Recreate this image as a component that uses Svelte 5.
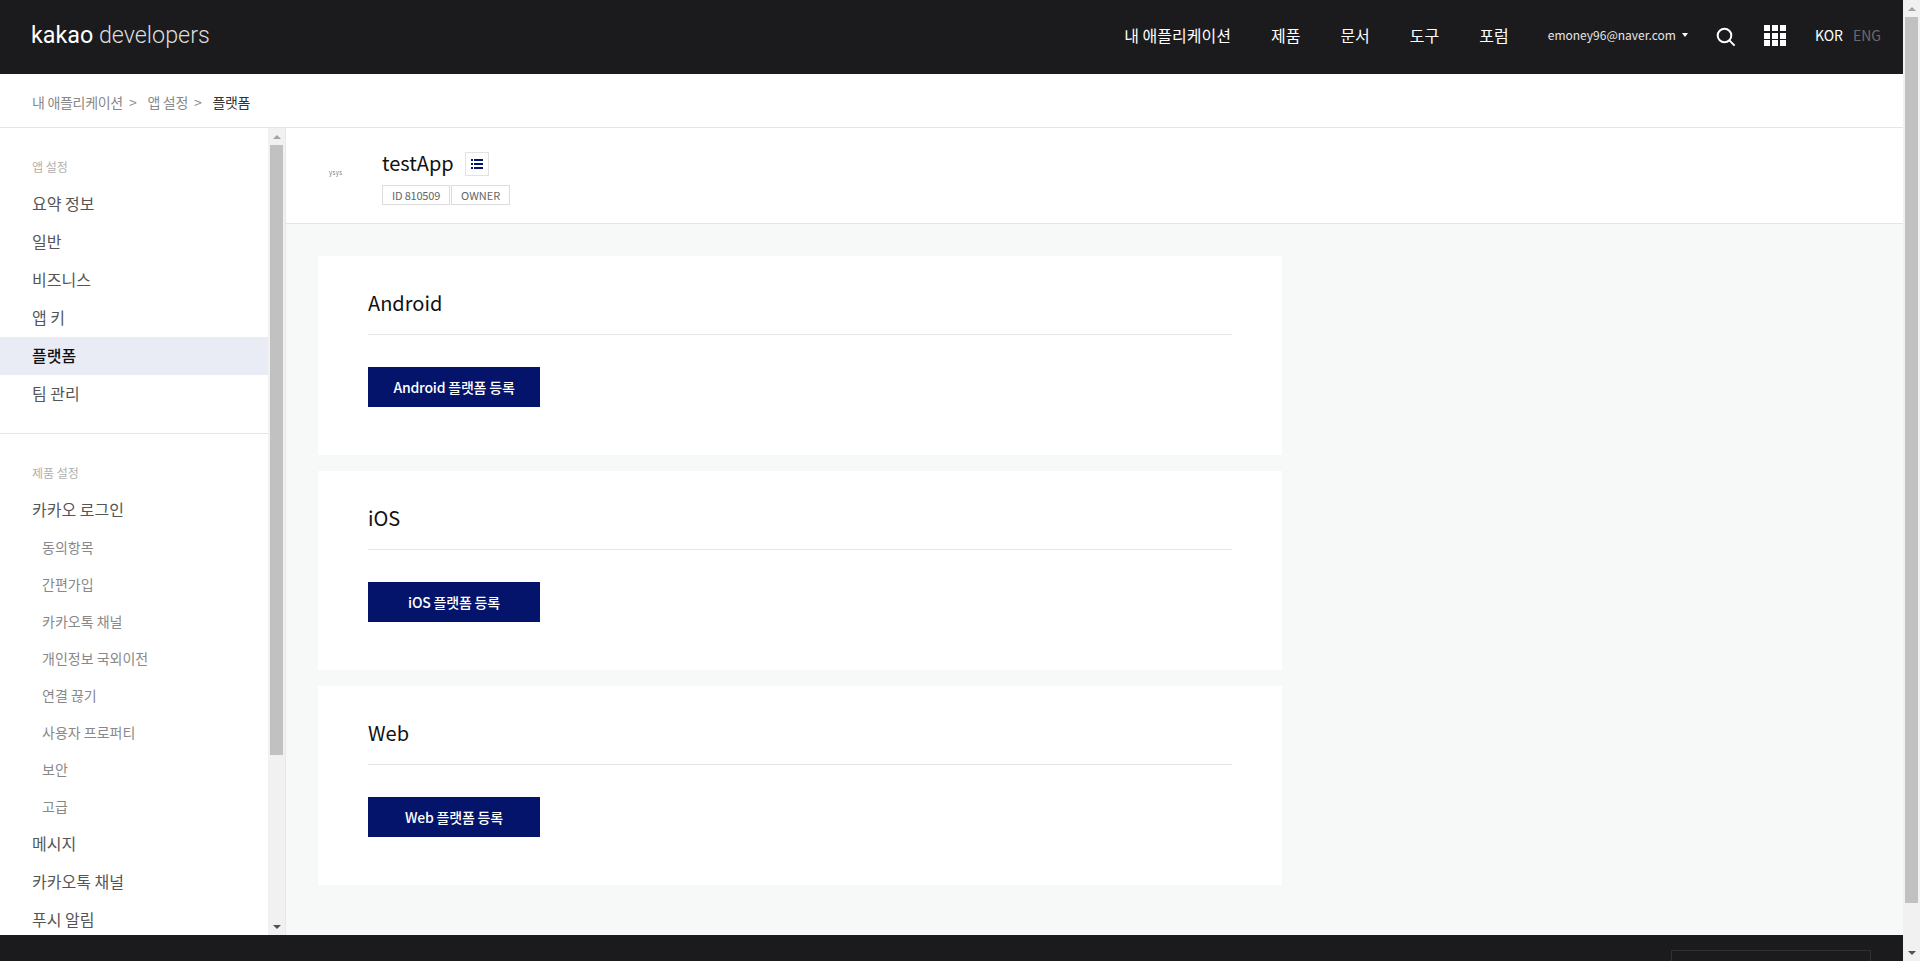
<script lang="ts">
	const appMenu = ['요약 정보', '일반', '비즈니스', '앱 키', '플랫폼', '팀 관리'];
	const loginMenu = ['동의항목', '간편가입', '카카오톡 채널', '개인정보 국외이전', '연결 끊기', '사용자 프로퍼티', '보안', '고급'];
	const platforms = ['Android', 'iOS', 'Web'];
	const nav = ['내 애플리케이션', '제품', '문서', '도구', '포럼'];
</script>

{#snippet scrollbar(kind: string)}
	<div class="scrollbar {kind}">
		<span class="cap"><i class="arrow up"></i></span>
		<div class="thumb"></div>
		<span class="cap end"><i class="arrow down"></i></span>
	</div>
{/snippet}

<div class="app">
	<div class="page">
		<header class="topbar">
			<div class="logo"><b>kakao</b> developers</div>
			<nav class="nav">
				{#each nav as item}
					<a href="#top">{item}</a>
				{/each}
			</nav>
			<div class="account">emoney96@naver.com<span class="caret"></span></div>
			<svg class="search" width="20" height="20" viewBox="0 0 20 20" fill="none" stroke="#fff" stroke-width="2">
				<circle cx="8.5" cy="8.5" r="6.8" />
				<path d="M13.4 13.4 L18.6 18.6" />
			</svg>
			<div class="grid">
				{#each Array(9) as _}
					<i></i>
				{/each}
			</div>
			<div class="lang"><span class="on">KOR</span><span>ENG</span></div>
		</header>

		<div class="crumbs">
			<span>내 애플리케이션</span>
			<em>&gt;</em>
			<span>앱 설정</span>
			<em>&gt;</em>
			<strong>플랫폼</strong>
		</div>

		<div class="body">
			<aside class="side">
				<div class="menu">
					<section class="group first">
						<h4>앱 설정</h4>
						{#each appMenu as item}
							<a href="#top" class="item" class:active={item === '플랫폼'}>{item}</a>
						{/each}
					</section>
					<section class="group">
						<h4>제품 설정</h4>
						<a href="#top" class="item">카카오 로그인</a>
						{#each loginMenu as item}
							<a href="#top" class="sub">{item}</a>
						{/each}
						<a href="#top" class="item">메시지</a>
						<a href="#top" class="item">카카오톡 채널</a>
						<a href="#top" class="item">푸시 알림</a>
					</section>
				</div>
				{@render scrollbar('inner')}
			</aside>

			<main class="main">
				<div class="apphead">
					<div class="applogo">ysys</div>
					<div>
						<div class="titlerow">
							<h2>testApp</h2>
							<button class="listbtn" aria-label="목록">
								<svg width="12" height="10" viewBox="0 0 12 10" fill="#04146b">
									<rect x="0" y="0" width="2" height="2" />
									<rect x="3" y="0" width="9" height="2" />
									<rect x="0" y="4" width="2" height="2" />
									<rect x="3" y="4" width="9" height="2" />
									<rect x="0" y="8" width="2" height="2" />
									<rect x="3" y="8" width="9" height="2" />
								</svg>
							</button>
						</div>
						<div class="badges">
							<span class="id">ID 810509</span>
							<span>OWNER</span>
						</div>
					</div>
				</div>

				<div class="cards">
					{#each platforms as name}
						<section class="card">
							<h3>{name}</h3>
							<button class="register">{name} 플랫폼 등록</button>
						</section>
					{/each}
				</div>
			</main>
		</div>

		<footer class="footer">
			<div class="family"></div>
		</footer>
	</div>
	{@render scrollbar('outer')}
</div>

<style>
	:global(body) {
		margin: 0;
		overflow: hidden;
		font-family: 'Noto Sans CJK KR', 'Noto Sans', sans-serif;
	}

	.app {
		display: flex;
		height: 961px;
		overflow: hidden;
		background: #fff;
	}

	.page {
		flex: 1;
		min-width: 0;
		display: flex;
		flex-direction: column;
	}

	a {
		text-decoration: none;
		color: inherit;
	}

	/* top bar */
	.topbar {
		flex: none;
		height: 74px;
		display: flex;
		align-items: center;
		padding: 0 22px 0 31px;
		background: #1b1b1d;
		color: #fff;
	}

	.logo {
		font-family: Roboto, sans-serif;
		font-weight: 300;
		font-size: 23.3px;
		line-height: 1;
		color: #ddd;
		margin-top: -2px;
	}

	.logo b {
		font-weight: 400;
		color: #fff;
	}

	.nav {
		margin-left: auto;
		display: flex;
		gap: 40px;
		font-size: 16px;
		line-height: 24px;
		margin-top: -4px;
	}

	.account {
		margin-left: 39px;
		font-size: 12px;
		line-height: 20px;
		margin-top: -4px;
		color: #e6e6e6;
		display: flex;
		align-items: center;
	}

	.caret {
		margin-left: 6px;
		border: 3px solid transparent;
		border-top: 4px solid #fff;
		border-bottom: 0;
	}

	.search {
		margin: -1px 0 0 28px;
	}

	.grid {
		margin: -3px 0 0 28px;
		display: grid;
		grid-template-columns: repeat(3, 6px);
		column-gap: 2px;
		row-gap: 1.5px;
		width: 22px;
	}

	.grid i {
		display: block;
		width: 6px;
		height: 6px;
		background: #fff;
	}

	.lang {
		margin: -4px 0 0 29px;
		display: flex;
		gap: 10px;
		font-size: 14px;
		line-height: 20px;
		color: #6b6b6b;
	}

	.lang .on {
		color: #fff;
	}

	/* breadcrumb */
	.crumbs {
		flex: none;
		height: 53px;
		box-sizing: content-box;
		border-bottom: 1px solid #e5e5e5;
		display: flex;
		align-items: center;
		gap: 9px;
		padding-left: 32px;
		font-size: 14px;
		letter-spacing: -0.3px;
		line-height: 22px;
		color: #888;
	}

	.crumbs span,
	.crumbs strong {
		margin-top: 2px;
	}

	.crumbs em {
		font-style: normal;
		margin: 2px 2px 0 -3px;
	}

	.crumbs strong {
		font-weight: 400;
		color: #333;
	}

	.body {
		flex: 1;
		min-height: 0;
		display: flex;
	}

	/* sidebar */
	.side {
		flex: none;
		width: 286px;
		display: flex;
		box-sizing: border-box;
		border-right: 1px solid #e8e8e8;
	}

	.menu {
		flex: 1;
		overflow: hidden;
	}

	.group {
		padding-top: 27px;
	}

	.group.first {
		padding-bottom: 20px;
		border-bottom: 1px solid #e5e5e5;
	}

	.group h4 {
		margin: 0 0 6px;
		padding-left: 32px;
		font-size: 12px;
		line-height: 24px;
		font-weight: 400;
		color: #b0b0b0;
	}

	.item,
	.sub {
		display: block;
		color: #555;
	}

	.item {
		height: 38px;
		line-height: 36px;
		padding-left: 32px;
		font-size: 16px;
	}

	.item.active {
		background: #e9ecf5;
		color: #111;
		font-weight: 500;
	}

	.sub {
		height: 37px;
		line-height: 37px;
		padding-left: 42px;
		font-size: 14px;
		color: #888;
	}

	/* app header */
	.main {
		flex: 1;
		min-width: 0;
		background: #f7f8f8;
	}

	.apphead {
		height: 95px;
		border-bottom: 1px solid #e5e5e5;
		background: #fff;
		display: flex;
		align-items: flex-start;
		box-sizing: content-box;
	}

	.applogo {
		width: 96px;
		box-sizing: border-box;
		padding: 39px 0 0 43px;
		font-size: 6px;
		line-height: 12px;
		color: #777;
		letter-spacing: 0.4px;
	}

	.titlerow {
		display: flex;
		align-items: center;
		gap: 11px;
		margin-top: 24px;
		height: 24px;
	}

	.titlerow h2 {
		margin: -2px 0 0;
		font-size: 20px;
		font-weight: 400;
		color: #111;
		line-height: 24px;
	}

	.listbtn {
		width: 24px;
		height: 24px;
		padding: 0;
		display: flex;
		align-items: center;
		justify-content: center;
		background: #fff;
		border: 1px solid #e2e2e2;
	}

	.badges {
		display: flex;
		gap: 1px;
		margin-top: 9px;
	}

	.badges span {
		height: 20px;
		line-height: 18px;
		box-sizing: border-box;
		padding: 0 9px;
		border: 1px solid #dcdcdc;
		font-size: 11px;
		color: #666;
	}

	.badges .id {
		letter-spacing: -0.2px;
		padding: 0 9px;
	}

	/* platform cards */
	.cards {
		display: flex;
		flex-direction: column;
		gap: 16px;
		padding: 32px 0 0 32px;
	}

	.card {
		width: 964px;
		height: 199px;
		box-sizing: border-box;
		padding: 30px 50px 0;
		background: #fff;
	}

	.card h3 {
		margin: 0 0 32px;
		padding-bottom: 14px;
		border-bottom: 1px solid #e5e5e5;
		font-size: 20px;
		line-height: 34px;
		font-weight: 400;
		color: #111;
	}

	.register {
		display: block;
		width: 172px;
		height: 40px;
		padding: 0;
		border: 0;
		background: #04146b;
		color: #fff;
		font: 500 14px 'Noto Sans CJK KR', sans-serif;
		letter-spacing: -0.2px;
	}

	/* footer */
	.footer {
		flex: none;
		height: 26px;
		overflow: hidden;
		background: #1b1b1d;
		padding: 15px 32px 0 0;
		box-sizing: border-box;
		display: flex;
		justify-content: flex-end;
	}

	.family {
		width: 200px;
		height: 40px;
		border: 1px solid #2f2f36;
		box-sizing: border-box;
	}

	/* scrollbars */
	.scrollbar {
		flex: none;
		width: 17px;
		display: flex;
		flex-direction: column;
		align-items: center;
		background: #f1f1f1;
	}

	.thumb {
		width: 13px;
		background: #c1c1c1;
	}

	.inner .thumb {
		height: 610px;
	}

	.outer .thumb {
		height: 886px;
	}

	.cap {
		flex: none;
		height: 17px;
		display: flex;
		align-items: center;
		justify-content: center;
	}

	.cap.end {
		margin-top: auto;
	}

	.arrow {
		width: 0;
		height: 0;
		border: 4px solid transparent;
	}

	.arrow.up {
		border-top: 0;
		border-bottom: 4px solid #a3a3a3;
	}

	.arrow.down {
		border-bottom: 0;
		border-top: 4px solid #505050;
	}
</style>
